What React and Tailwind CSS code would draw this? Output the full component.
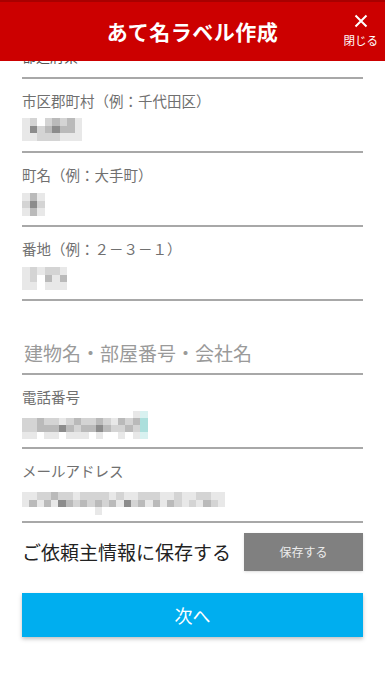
import React from "react";

const font = { fontFamily: '"Noto Sans CJK JP", "Noto Sans", sans-serif' };

// mosaic shades used to hide personal data
const shade = {
  "0": "bg-transparent",
  "1": "bg-[#e8e8e8]",
  "2": "bg-[#d4d4d4]",
  "3": "bg-[#bababa]",
  "4": "bg-[#8c8c8c]",
  c: "bg-[#d8f1f0]",
  C: "bg-[#acdfdc]",
};

const Mosaic = ({ rows, tile }) => (
  <div className="flex flex-col">
    {rows.map((row, r) => (
      <div key={r} className="flex">
        {row.split("").map((ch, i) => (
          <div key={i} className={`${tile} ${shade[ch]}`} />
        ))}
      </div>
    ))}
  </div>
);

const Field = ({ label, children, pad = "pt-[8px]" }) => (
  <div className="pt-[12px] border-b-2 border-[#a8a8a8]">
    <div className="h-[20px] text-[14.5px] leading-[20px] text-[#707070]">{label}</div>
    <div className={`h-[40px] ${pad}`}>{children}</div>
  </div>
);

const App = () => {
  return (
    <div className="w-[385px] h-[700px] bg-white overflow-hidden" style={font}>
      {/* HEADER */}
      <div className="h-[61px] bg-[#cc0000] border-t-2 border-[#a80000] flex items-center justify-center relative">
        <h1 className="text-white text-[21px] font-bold tracking-[0.5px]">あて名ラベル作成</h1>
        <button className="absolute right-[7px] top-[12px] flex flex-col items-center text-white">
          <svg width="14" height="14" viewBox="0 0 14 14">
            <path d="M1.5 1.5 L12.5 12.5 M12.5 1.5 L1.5 12.5" stroke="white" strokeWidth="2" />
          </svg>
          <span className="text-[11.5px] leading-[16px] mt-[4px]">閉じる</span>
        </button>
      </div>

      {/* FORM */}
      <div className="px-[22px]">
        {/* previous field, scrolled under the header */}
        <div className="h-[18px] overflow-hidden border-b-2 border-[#a8a8a8]">
          <div className="-mt-[15px] text-[14px] leading-[20px] text-[#555]">都道府県</div>
        </div>

        <Field label="市区郡町村（例：千代田区）" pad="pt-[7px]">
          <Mosaic tile="w-[7.5px] h-[7.5px]" rows={["12023231", "14234331", "11222111"]} />
        </Field>

        <Field label="町名（例：大手町）" pad="pt-[8px]">
          <Mosaic tile="w-[7.5px] h-[7.5px]" rows={["131", "242", "131"]} />
        </Field>

        <Field label="番地（例：２－３－１）" pad="pt-[8px]">
          <Mosaic tile="w-[7.5px] h-[7.5px]" rows={["121221", "120313", "110111"]} />
        </Field>

        <div className="pt-[12px] border-b-2 border-[#a8a8a8]">
          <div className="h-[20px]" />
          <div className="h-[40px] flex items-center pl-[2px] text-[19px] text-[#9a9a9a]">
            建物名・部屋番号・会社名
          </div>
        </div>

        <Field label="電話番号" pad="pt-[4px]">
          <Mosaic
            tile="w-[7.4px] h-[7px]"
            rows={[
              "0000000000000001c",
              "2232212322321323C",
              "2233343233432232C",
              "1101101110100101c",
            ]}
          />
        </Field>

        <Field label="メールアドレス" pad="pt-[11px]">
          <Mosaic
            tile="w-[7.25px] h-[7.5px]"
            rows={[
              "1122322122221211222112112211",
              "1313143232323142313132121321",
              "0000000000100000000000000000",
            ]}
          />
        </Field>

        {/* SAVE ROW */}
        <div className="mt-[10px] flex items-center justify-between">
          <span className="text-[19px] text-[#222]">ご依頼主情報に保存する</span>
          <button className="w-[119px] h-[38px] bg-[#808080] text-[#ececec] text-[12px] shadow-sm">
            保存する
          </button>
        </div>

        <button className="mt-[22px] w-full h-[44px] bg-[#00aeef] text-white text-[18px] shadow-[0_2px_4px_rgba(0,0,0,0.25)]">
          次へ
        </button>
      </div>
    </div>
  );
};

export default App;
